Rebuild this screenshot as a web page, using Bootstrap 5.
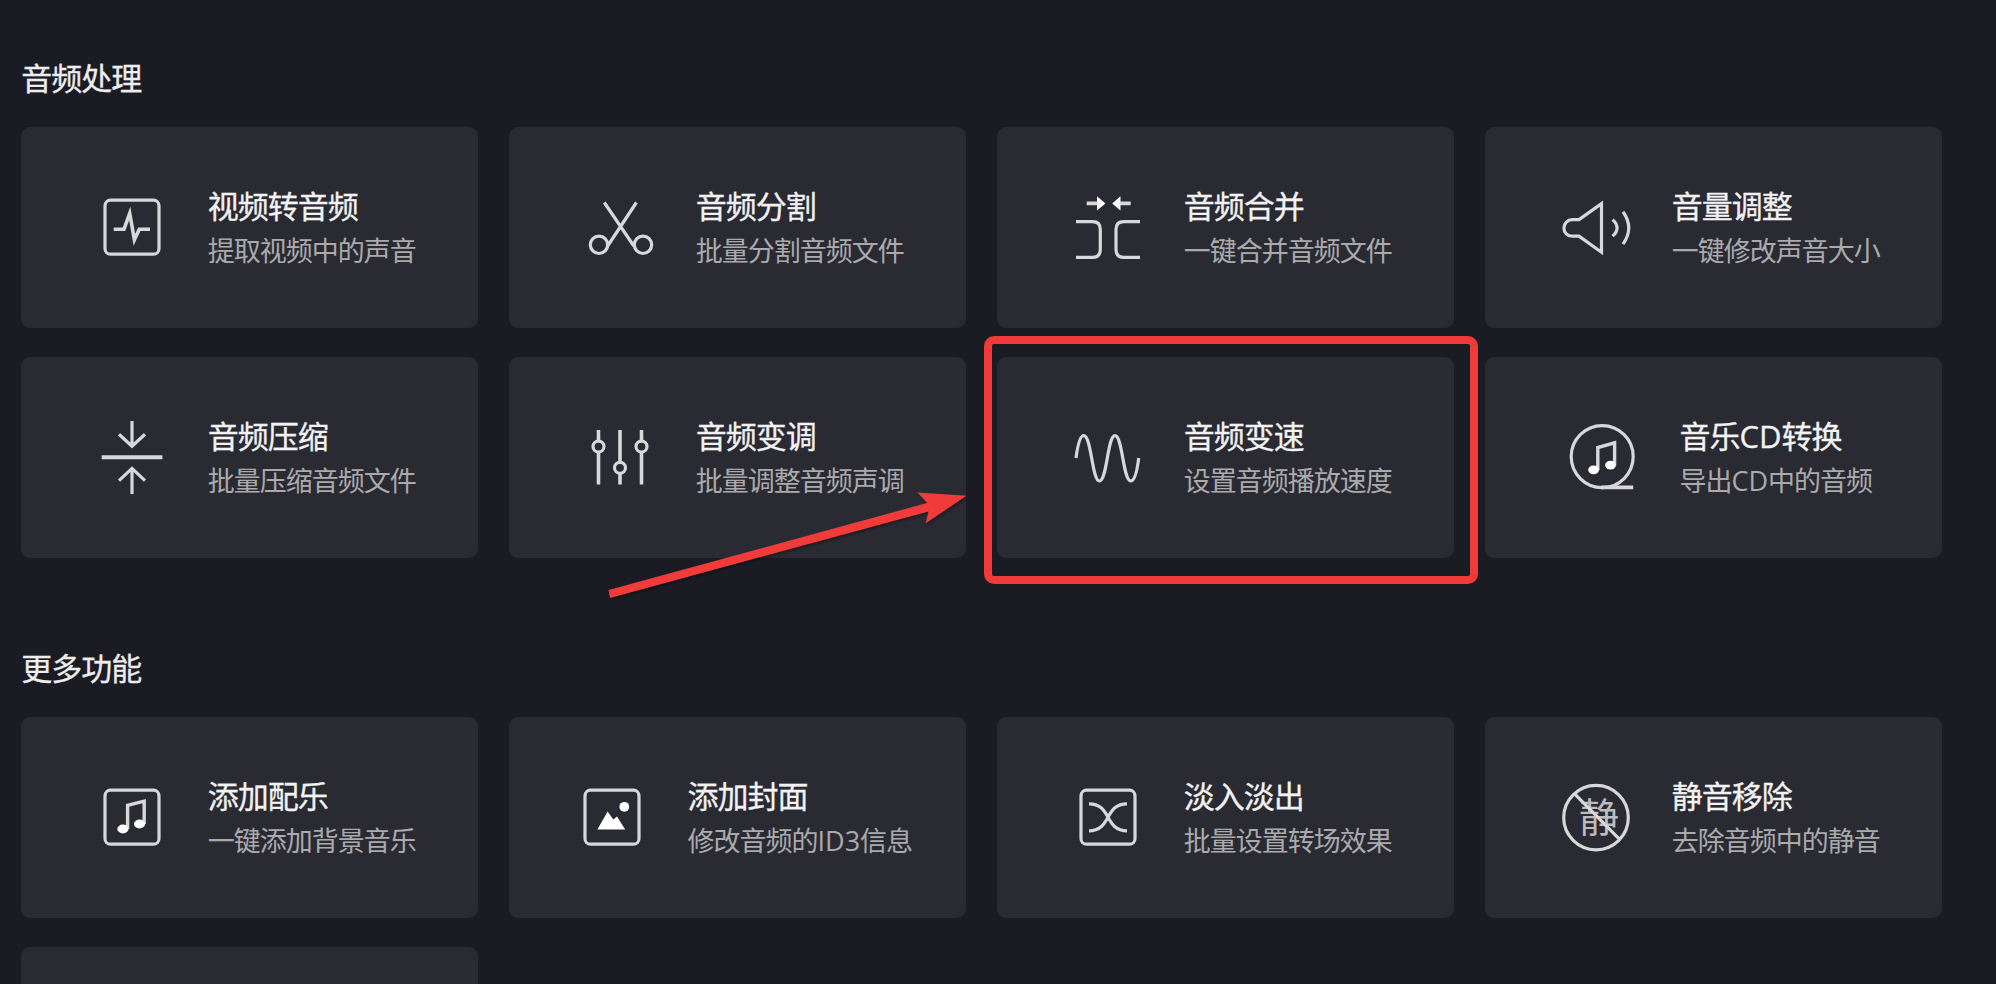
<!DOCTYPE html>
<html lang="zh-CN">
<head>
<meta charset="utf-8">
<meta name="viewport" content="width=device-width, initial-scale=1">
<title>音频处理</title>
<link href="https://cdn.jsdelivr.net/npm/bootstrap@5.3.0/dist/css/bootstrap.min.css" rel="stylesheet">
<style>
  body { background: #1b1b24; color: #ededee; font-family: "Noto Sans CJK SC", sans-serif; }
  .page { padding: 55px 0 0 21.3px; height: 984px; overflow: hidden; }
  .section-title { font-size: 31px; line-height: 44px; font-weight: 400; margin: 0 0 28px; letter-spacing: -1px; -webkit-text-stroke: .3px; }
  .tools { display: grid; grid-template-columns: repeat(4, 457px); grid-auto-rows: 201px; gap: 29px 31px; }
  .section-more { margin-top: 87px; }
  .tool { background: #2a2a32; border: 0; border-radius: 9px; color: inherit; gap: 28px; }
  .tool-text { margin-top: -1px; }
  .tool-icon { width: 96px; height: 96px; fill: none; stroke: #d8d8da; stroke-width: 3.2; flex: none; overflow: visible; margin-top: -1px; }
  .tool-icon .solid { fill: #fff; stroke: none; }
  .tool-name { font-size: 31px; letter-spacing: -1px; line-height: 45px; white-space: nowrap; color: #f2f2f3; -webkit-text-stroke: .3px; }
  .tool-desc { font-size: 27px; letter-spacing: -1px; line-height: 45px; white-space: nowrap; color: #aaaaad; }
  .latin { font-family: "Open Sans", sans-serif; line-height: 1; letter-spacing: 0; }
  .highlight { position: absolute; inset: -21px -23.5px -26px -13.5px; border: 8px solid #f13a3a; border-radius: 10px; pointer-events: none; }
  .pointer { position: absolute; left: -392px; top: 128.5px; width: 370px; height: 120px; fill: #f13a3a; pointer-events: none; filter: drop-shadow(1px 2px 1px rgba(0,0,0,.35)); }
</style>
</head>
<body class="overflow-hidden">
<main class="page">
  <section>
    <h2 class="section-title">音频处理</h2>
    <div class="tools">
      <div class="card tool flex-row align-items-center justify-content-center">
        <svg class="tool-icon" viewBox="0 0 96 96"><rect x="21" y="21.2" width="54" height="54" rx="5.5"/><path d="M29.7 50.2H40L45.7 34.5 50.4 60.8 55.3 50.2H66" stroke-width="3.6"/></svg>
        <div class="tool-text"><div class="tool-name">视频转音频</div><div class="tool-desc">提取视频中的声音</div></div>
      </div>
      <div class="card tool flex-row align-items-center justify-content-center">
        <svg class="tool-icon" viewBox="0 0 96 96"><path d="M32.3 23.5 61.8 67M64.4 23.5 35 68"/><circle cx="27" cy="65.8" r="8.7"/><circle cx="71" cy="65.8" r="8.7"/></svg>
        <div class="tool-text"><div class="tool-name">音频分割</div><div class="tool-desc">批量分割音频文件</div></div>
      </div>
      <div class="card tool flex-row align-items-center justify-content-center">
        <svg class="tool-icon" viewBox="0 0 96 96"><path d="M16 42.6H32.5Q40.3 42.6 40.3 50.4V70.6Q40.3 78.4 32.5 78.4H16M80 42.6H63.8Q56 42.6 56 50.4V70.6Q56 78.4 63.8 78.4H80"/><path d="M26.7 24.4H41M70.7 24.4H56" stroke-width="3.8"/><path class="solid" d="M37 17.3 45.5 24.4 37 31.5V26L38.5 24.4 37 22.8ZM60.5 17.3 52.2 24.4 60.5 31.5V26L59 24.4 60.5 22.8Z"/></svg>
        <div class="tool-text"><div class="tool-name">音频合并</div><div class="tool-desc">一键合并音频文件</div></div>
      </div>
      <div class="card tool flex-row align-items-center justify-content-center">
        <svg class="tool-icon" viewBox="0 0 96 96"><path d="M53.5 24.6V73.2L31 57.2H24.2A8.3 8.3 0 0 1 24.2 40.6H31Z"/><path d="M64.6 40.6Q73.5 48.9 64.6 57.2M75 32.8Q86.5 48.9 75 65.2"/></svg>
        <div class="tool-text"><div class="tool-name">音量调整</div><div class="tool-desc">一键修改声音大小</div></div>
      </div>
      <div class="card tool flex-row align-items-center justify-content-center">
        <svg class="tool-icon" viewBox="0 0 96 96"><path d="M48 12V37M35 25.3 48 37.3 61 25.3M48 85V59M35 71.6 48 59.4 61 71.6"/><path d="M17.7 48.2H78.4" stroke-width="4"/></svg>
        <div class="tool-text"><div class="tool-name">音频压缩</div><div class="tool-desc">批量压缩音频文件</div></div>
      </div>
      <div class="card tool flex-row align-items-center justify-content-center">
        <svg class="tool-icon" viewBox="0 0 96 96"><path d="M26.5 21V32.4M26.5 43V75.5M48 21V53.4M48 64.2V75.5M69.5 21V32.4M69.5 43V75.5" stroke-width="3.6"/><circle cx="26.5" cy="37.6" r="5.5"/><circle cx="48" cy="58.8" r="5.5"/><circle cx="69.5" cy="37.6" r="5.5"/></svg>
        <div class="tool-text"><div class="tool-name">音频变调</div><div class="tool-desc">批量调整音频声调</div></div>
      </div>
      <div class="card tool flex-row align-items-center justify-content-center position-relative">
        <svg class="tool-icon" viewBox="0 0 96 96"><path d="M16 49C18 34 20.5 26.7 23.7 26.7C31.5 26.7 32 72 39.5 72C47 72 47.5 26.7 55 26.7C62.5 26.7 63.2 72 70.7 72C74.3 72 77 63 78.7 49"/></svg>
        <div class="tool-text"><div class="tool-name">音频变速</div><div class="tool-desc">设置音频播放速度</div></div>
        <div class="highlight"></div>
        <svg class="pointer" viewBox="0 0 370 120"><path d="M3.5 104 322 17 312.5 6.5 361.5 9.8 320.5 37.5 323.5 25.5 5 112Z"/></svg>
      </div>
      <div class="card tool flex-row align-items-center justify-content-center">
        <svg class="tool-icon" viewBox="0 0 96 96"><circle cx="47.2" cy="47.6" r="31"/><path d="M46 78.4H78.2" stroke-width="3.8"/><path d="M42.8 61V38.5L59.6 33.8V56.5" stroke-width="3.4"/><ellipse class="solid" cx="38.6" cy="60.8" rx="5.4" ry="4.4"/><ellipse class="solid" cx="55.5" cy="56.1" rx="5.4" ry="4.4"/></svg>
        <div class="tool-text"><div class="tool-name">音乐<span class="latin">CD</span>转换</div><div class="tool-desc">导出<span class="latin">CD</span>中的音频</div></div>
      </div>
    </div>
  </section>
  <section class="section-more">
    <h2 class="section-title">更多功能</h2>
    <div class="tools">
      <div class="card tool flex-row align-items-center justify-content-center">
        <svg class="tool-icon" viewBox="0 0 96 96"><rect x="21" y="21.2" width="54" height="54" rx="5.5"/><path d="M43.6 60V36.3L60.2 32.2V55" stroke-width="3.4"/><ellipse class="solid" cx="38.9" cy="60" rx="5.6" ry="4.4"/><ellipse class="solid" cx="55.5" cy="55" rx="5.6" ry="4.4"/></svg>
        <div class="tool-text"><div class="tool-name">添加配乐</div><div class="tool-desc">一键添加背景音乐</div></div>
      </div>
      <div class="card tool flex-row align-items-center justify-content-center">
        <svg class="tool-icon" viewBox="0 0 96 96"><rect x="21" y="21.2" width="54" height="54" rx="5.5"/><path class="solid" d="M33.4 60.4 43.6 42.4 49.3 50.4 53 47.6 61.2 60.4Z"/><circle class="solid" cx="60.3" cy="37.8" r="4.9"/></svg>
        <div class="tool-text"><div class="tool-name">添加封面</div><div class="tool-desc">修改音频的<span class="latin">ID3</span>信息</div></div>
      </div>
      <div class="card tool flex-row align-items-center justify-content-center">
        <svg class="tool-icon" viewBox="0 0 96 96"><rect x="21" y="21.2" width="54" height="54" rx="5.5"/><path d="M29 34.8C40 34.8 44 41 48 48.2C52 55.5 56 61.8 67 61.8M67 34.8C56 34.8 52 41 48 48.2C44 55.5 40 61.8 29 61.8"/></svg>
        <div class="tool-text"><div class="tool-name">淡入淡出</div><div class="tool-desc">批量设置转场效果</div></div>
      </div>
      <div class="card tool flex-row align-items-center justify-content-center">
        <svg class="tool-icon" viewBox="0 0 96 96"><text x="51" y="63" text-anchor="middle" font-size="40" fill="#bcbcbf" stroke="none">静</text><circle cx="48" cy="48.6" r="32.3"/><path d="M26.6 24.8 71.6 70.4"/></svg>
        <div class="tool-text"><div class="tool-name">静音移除</div><div class="tool-desc">去除音频中的静音</div></div>
      </div>
      <div class="card tool"></div>
    </div>
  </section>
</main>
<script src="https://cdn.jsdelivr.net/npm/bootstrap@5.3.0/dist/js/bootstrap.bundle.min.js"></script>
</body>
</html>
